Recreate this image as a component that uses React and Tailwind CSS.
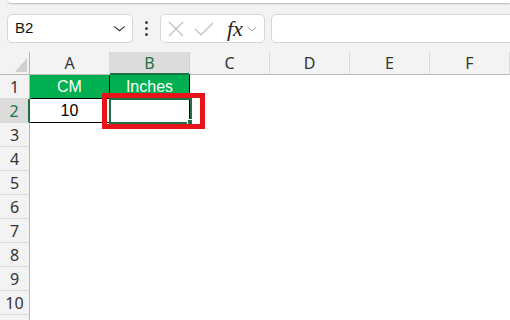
import React from 'react';

const COLS = ['A', 'B', 'C', 'D', 'E', 'F'];
const ROWS = [1, 2, 3, 4, 5, 6, 7, 8, 9, 10, 11];

const Chevron = ({ className }) => (
  <svg viewBox="0 0 14 8" className={className} fill="none" stroke="currentColor" strokeWidth="1.3">
    <path d="M1 1.5 L7 6.5 L13 1.5" />
  </svg>
);

const FormulaBar = () => (
  <div className="flex items-center h-[29px] mt-[11px] ml-[7px]">
    {/* name box */}
    <div className="w-[126px] h-full bg-white border border-[#d6d6d6] rounded-[5px] flex items-center justify-between pl-[7px] pr-[6px]">
      <span className="text-[15px] text-[#111]">B2</span>
      <Chevron className="w-[13px] h-[7px] text-[#333]" />
    </div>
    {/* grip dots */}
    <div className="w-[27px] flex flex-col items-center gap-[3px]">
      <span className="w-[3px] h-[3px] rounded-full bg-[#444]" />
      <span className="w-[3px] h-[3px] rounded-full bg-[#444]" />
      <span className="w-[3px] h-[3px] rounded-full bg-[#444]" />
    </div>
    {/* cancel / enter / fx */}
    <div className="w-[105px] h-full bg-white border border-[#d6d6d6] rounded-[5px] flex items-center pl-[7px]">
      <svg viewBox="0 0 16 16" className="w-[16px] h-[16px]" fill="none" stroke="#bdbdbd" strokeWidth="1.2">
        <path d="M1 1 L15 15 M15 1 L1 15" />
      </svg>
      <svg viewBox="0 0 20 14" className="w-[20px] h-[14px] ml-[10px]" fill="none" stroke="#bdbdbd" strokeWidth="1.2">
        <path d="M1 7 L7 13 L19 1" />
      </svg>
      <span className="ml-[13px] text-[22px] leading-none italic text-[#222] font-['Liberation_Serif',serif]">fx</span>
      <Chevron className="w-[10px] h-[6px] ml-[4px] text-[#999]" />
    </div>
    {/* formula input */}
    <div className="ml-[6px] h-full flex-1 -mr-4 bg-white border border-[#d6d6d6] rounded-[5px]" />
  </div>
);

const cellStyle = (r, c) => {
  if (r === 1 && (c === 'A' || c === 'B')) return 'bg-[#00b050] text-white border-r border-b border-black';
  if (r === 2 && (c === 'A' || c === 'B')) return 'bg-white text-black border-r border-b border-black';
  return 'bg-white';
};

const cellText = (r, c) => {
  if (r === 1 && c === 'A') return 'CM';
  if (r === 1 && c === 'B') return 'Inches';
  if (r === 2 && c === 'A') return '10';
  return '';
};

const Sheet = () => (
  <div className="relative mt-[9px] grid grid-cols-[30px_repeat(6,80px)] grid-rows-[23px_repeat(11,24px)]">
    {/* corner */}
    <div className="relative bg-[#f3f3f3] border-r border-b border-[#b8b8b8]">
      <svg viewBox="0 0 12 14" className="absolute left-[15px] top-[6px] w-[12px] h-[14px]">
        <polygon points="12,0 12,14 0,14" fill="#d0d0d0" />
      </svg>
    </div>
    {COLS.map((c) =>
      c === 'B' ? (
        <div key={c} className="flex items-center justify-center bg-[#dcdcdc] border-r border-[#d0d0d0] border-b-2 border-b-[#1e7145] text-[#1e7145] text-[16px] font-['Noto_Sans',sans-serif]">
          {c}
        </div>
      ) : (
        <div key={c} className="flex items-center justify-center bg-[#f3f3f3] border-r border-[#d8d8d8] border-b border-b-[#b8b8b8] text-[#333] text-[16px] font-['Noto_Sans',sans-serif]">
          {c}
        </div>
      )
    )}
    {ROWS.map((r) => (
      <React.Fragment key={r}>
        {r === 2 ? (
          <div className="flex items-center justify-center bg-[#dcdcdc] border-r-2 border-r-[#1e7145] border-b border-b-[#d6d6d6] text-[#1e7145] text-[16px] font-['Noto_Sans',sans-serif]">
            {r}
          </div>
        ) : (
          <div className="flex items-center justify-center bg-[#f3f3f3] border-r border-r-[#b8b8b8] border-b border-b-[#dadada] text-[#333] text-[16px] font-['Noto_Sans',sans-serif]">
            {/* row 11 only peeks in at the bottom edge */}
            {r < 11 ? r : ''}
          </div>
        )}
        {COLS.map((c) => (
          <div
            key={c}
            className={`flex items-center justify-center text-[16px] font-['Liberation_Sans',sans-serif] ${cellStyle(r, c)}`}
          >
            {cellText(r, c)}
          </div>
        ))}
      </React.Fragment>
    ))}

    {/* active cell B2 */}
    <div className="absolute left-[109px] top-[46px] w-[83px] h-[26px] border-2 border-[#1e7145]">
      <span className="absolute -right-[3px] -bottom-[3px] w-[6px] h-[6px] bg-[#1e7145] border border-white" />
    </div>

    {/* red highlight */}
    <div className="absolute left-[102px] top-[41px] w-[103px] h-[36px] border-[5px] border-[#e8141c]" />
  </div>
);

export default function App() {
  return (
    <div className="w-[510px] h-[320px] overflow-hidden bg-[#f3f3f3] font-['Liberation_Sans',sans-serif]">
      <div className="ml-2 h-[3px] bg-white rounded-bl-md shadow-[0_1px_2px_rgba(0,0,0,0.25)]" />
      <FormulaBar />
      <Sheet />
    </div>
  );
}
